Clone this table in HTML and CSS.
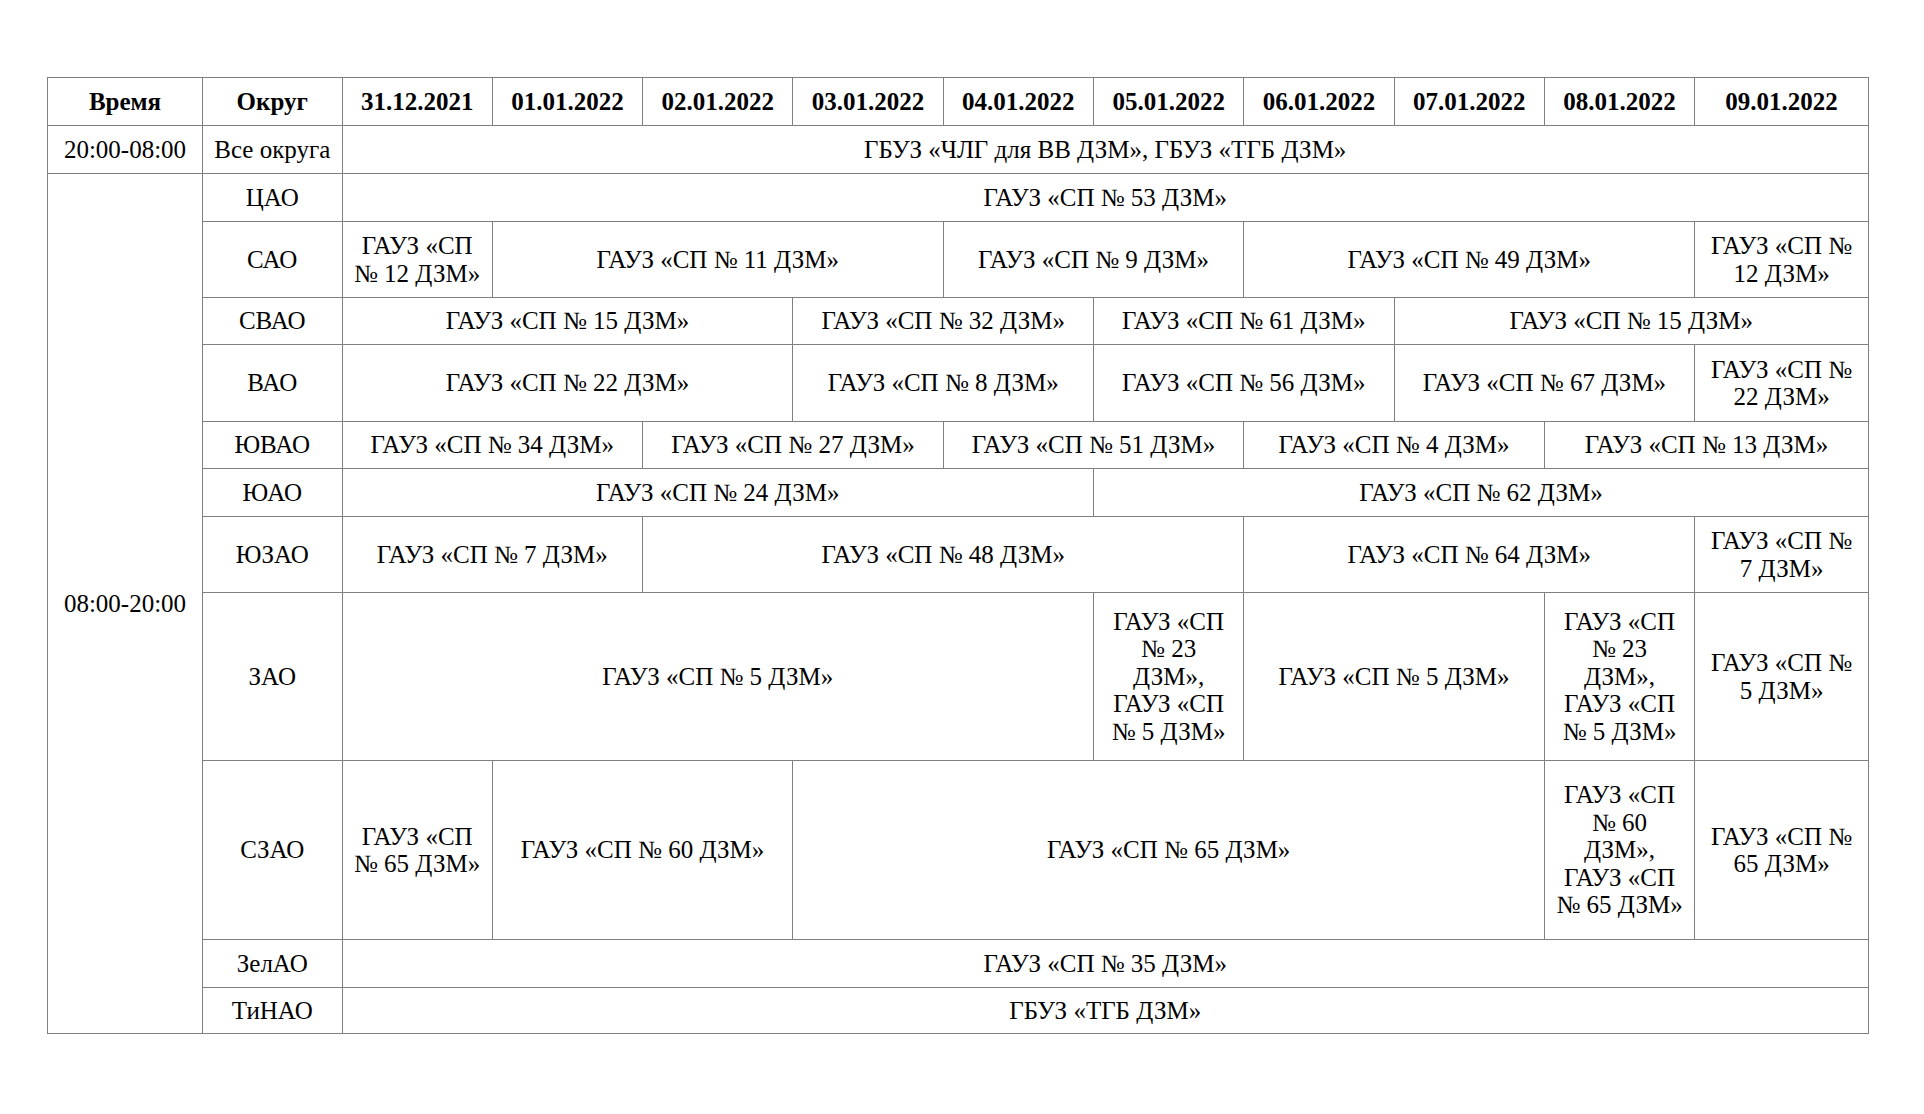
FILE: index.html
```html
<!DOCTYPE html>
<html lang="ru">
<head>
<meta charset="utf-8">
<title>График</title>
<link rel="stylesheet" href="styles.css">
</head>
<body>
<div class="page">
<table class="schedule">
<colgroup>
<col class="c-time"><col class="c-okr">
<col class="c-d"><col class="c-d"><col class="c-d"><col class="c-d"><col class="c-d">
<col class="c-d"><col class="c-d"><col class="c-d"><col class="c-d"><col class="c-last">
</colgroup>
<tr class="r48 head">
<th>Время</th><th>Округ</th>
<th>31.12.2021</th><th>01.01.2022</th><th>02.01.2022</th><th>03.01.2022</th><th>04.01.2022</th>
<th>05.01.2022</th><th>06.01.2022</th><th>07.01.2022</th><th>08.01.2022</th><th>09.01.2022</th>
</tr>
<tr class="r48">
<td>20:00-08:00</td><td>Все округа</td>
<td colspan="10">ГБУЗ «ЧЛГ для ВВ ДЗМ», ГБУЗ «ТГБ ДЗМ»</td>
</tr>
<tr class="r48">
<td rowspan="11">08:00-20:00</td><td>ЦАО</td>
<td colspan="10">ГАУЗ «СП № 53 ДЗМ»</td>
</tr>
<tr class="r76">
<td>САО</td>
<td>ГАУЗ «СП<br>№ 12 ДЗМ»</td>
<td colspan="3">ГАУЗ «СП № 11 ДЗМ»</td>
<td colspan="2">ГАУЗ «СП № 9 ДЗМ»</td>
<td colspan="3">ГАУЗ «СП № 49 ДЗМ»</td>
<td>ГАУЗ «СП №<br>12 ДЗМ»</td>
</tr>
<tr class="r47">
<td>СВАО</td>
<td colspan="3">ГАУЗ «СП № 15 ДЗМ»</td>
<td colspan="2">ГАУЗ «СП № 32 ДЗМ»</td>
<td colspan="2">ГАУЗ «СП № 61 ДЗМ»</td>
<td colspan="3">ГАУЗ «СП № 15 ДЗМ»</td>
</tr>
<tr class="r77">
<td>ВАО</td>
<td colspan="3">ГАУЗ «СП № 22 ДЗМ»</td>
<td colspan="2">ГАУЗ «СП № 8 ДЗМ»</td>
<td colspan="2">ГАУЗ «СП № 56 ДЗМ»</td>
<td colspan="2">ГАУЗ «СП № 67 ДЗМ»</td>
<td>ГАУЗ «СП №<br>22 ДЗМ»</td>
</tr>
<tr class="r47">
<td>ЮВАО</td>
<td colspan="2">ГАУЗ «СП № 34 ДЗМ»</td>
<td colspan="2">ГАУЗ «СП № 27 ДЗМ»</td>
<td colspan="2">ГАУЗ «СП № 51 ДЗМ»</td>
<td colspan="2">ГАУЗ «СП № 4 ДЗМ»</td>
<td colspan="2">ГАУЗ «СП № 13 ДЗМ»</td>
</tr>
<tr class="r48">
<td>ЮАО</td>
<td colspan="5">ГАУЗ «СП № 24 ДЗМ»</td>
<td colspan="5">ГАУЗ «СП № 62 ДЗМ»</td>
</tr>
<tr class="r76">
<td>ЮЗАО</td>
<td colspan="2">ГАУЗ «СП № 7 ДЗМ»</td>
<td colspan="4">ГАУЗ «СП № 48 ДЗМ»</td>
<td colspan="3">ГАУЗ «СП № 64 ДЗМ»</td>
<td>ГАУЗ «СП №<br>7 ДЗМ»</td>
</tr>
<tr class="r168">
<td>ЗАО</td>
<td colspan="5">ГАУЗ «СП № 5 ДЗМ»</td>
<td>ГАУЗ «СП<br>№ 23<br>ДЗМ»,<br>ГАУЗ «СП<br>№ 5 ДЗМ»</td>
<td colspan="2">ГАУЗ «СП № 5 ДЗМ»</td>
<td>ГАУЗ «СП<br>№ 23<br>ДЗМ»,<br>ГАУЗ «СП<br>№ 5 ДЗМ»</td>
<td>ГАУЗ «СП №<br>5 ДЗМ»</td>
</tr>
<tr class="r179">
<td>СЗАО</td>
<td>ГАУЗ «СП<br>№ 65 ДЗМ»</td>
<td colspan="2">ГАУЗ «СП № 60 ДЗМ»</td>
<td colspan="5">ГАУЗ «СП № 65 ДЗМ»</td>
<td>ГАУЗ «СП<br>№ 60<br>ДЗМ»,<br>ГАУЗ «СП<br>№ 65 ДЗМ»</td>
<td>ГАУЗ «СП №<br>65 ДЗМ»</td>
</tr>
<tr class="r48">
<td>ЗелАО</td>
<td colspan="10">ГАУЗ «СП № 35 ДЗМ»</td>
</tr>
<tr class="r46">
<td>ТиНАО</td>
<td colspan="10">ГБУЗ «ТГБ ДЗМ»</td>
</tr>
</table>
</div>
</body>
</html>
```
FILE: styles.css
```css
html, body {
  margin: 0;
  padding: 0;
  background: #ffffff;
}
.page {
  padding: 77px 0 0 47px;
}
.schedule {
  border-collapse: collapse;
  table-layout: fixed;
  width: 1821px;
  font-family: "Liberation Serif", "Times New Roman", serif;
  font-size: 25px;
  color: #000000;
}
.c-time { width: 155px; }
.c-okr { width: 139.5px; }
.c-d { width: 150.3px; }
.c-last { width: 173.8px; }
.schedule th,
.schedule td {
  border: 1px solid #808080;
  padding: 0 4px;
  text-align: center;
  vertical-align: middle;
  line-height: 27.5px;
  font-weight: normal;
}
.schedule th {
  font-weight: bold;
}
.r46 { height: 46px; }
.r47 { height: 47px; }
.r48 { height: 48px; }
.r76 { height: 76px; }
.r77 { height: 77px; }
.r168 { height: 168px; }
.r179 { height: 179px; }
```
